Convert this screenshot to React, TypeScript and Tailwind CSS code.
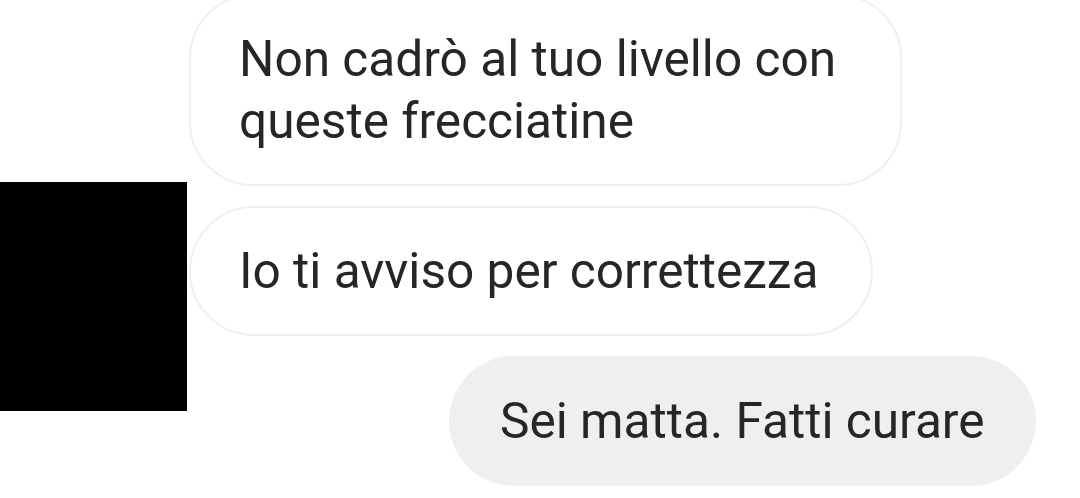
import React from "react";

export default function App() {
  return (
    <div className="relative w-[1080px] h-[498px] overflow-hidden bg-white" style={{ fontFamily: "Roboto, 'Noto Sans', sans-serif" }}>
      <div className="flex flex-col items-start mt-[-6px] gap-[20px] text-[49.6px] leading-[62px] text-[#262626]">
        <div className="ml-[189px] w-[713px] rounded-[64px] border-2 border-[#efefef] bg-white pl-[48px] pr-[40px] pt-[32px] pb-[32px]">
          Non cadrò al tuo livello con queste frecciatine
        </div>
        <div className="ml-[189px] w-fit rounded-full border-2 border-[#efefef] bg-white pl-[48px] pr-[53px] py-[32px] whitespace-nowrap">
          Io ti avviso per correttezza
        </div>
        <div className="ml-[449px] w-fit rounded-full bg-[#efefef] pl-[51px] pr-[51px] py-[34px] whitespace-nowrap">
          Sei matta. Fatti curare
        </div>
      </div>
      <div className="absolute left-0 top-[182px] w-[187px] h-[229px] bg-black" />
    </div>
  );
}
